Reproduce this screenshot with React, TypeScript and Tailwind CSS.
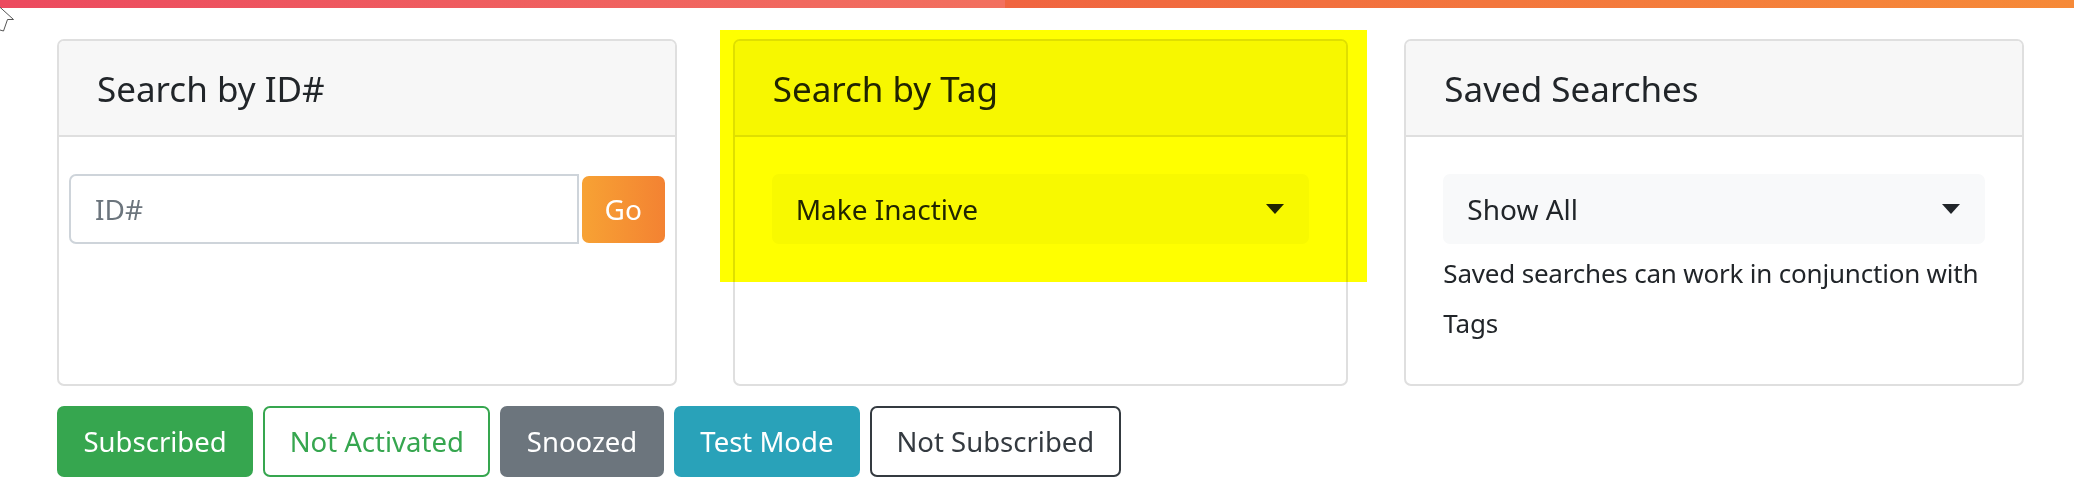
import React from "react";

function Caret() {
  return (
    <svg width="18" height="10" viewBox="0 0 18 10" className="shrink-0">
      <polygon points="0,0 18,0 9,10" fill="#212529" />
    </svg>
  );
}

function Card({
  title,
  bodyClass,
  children,
}: {
  title: string;
  bodyClass: string;
  children: React.ReactNode;
}) {
  return (
    <div className="flex-1 min-w-0 flex flex-col border-2 border-[#dfdfdf] rounded-[7px] bg-white overflow-hidden">
      <div className="h-[96px] bg-[#f7f7f7] border-b-2 border-[#dfdfdf] flex items-center px-[38px]">
        <span className="text-[35px] text-[#212529] leading-none">{title}</span>
      </div>
      <div className={bodyClass}>{children}</div>
    </div>
  );
}

export default function App() {
  return (
    <div className="relative w-[2074px] h-[497px] bg-white font-['Noto_Sans',sans-serif] text-[#212529] overflow-hidden">
      <div className="flex h-[8px]">
        <div className="w-[1005px] bg-linear-to-r from-[#ec4a5f] to-[#f2705f]" />
        <div className="flex-1 bg-linear-to-r from-[#f06440] to-[#f68a38]" />
      </div>

      <div className="flex items-stretch gap-[56px] pl-[57px] pr-[50px] mt-[31px]">
        <Card title="Search by ID#" bodyClass="px-[10px] pt-[37px]">
          <div className="flex items-center gap-[3px]">
            <input
              placeholder="ID#"
              size={4}
              className="flex-1 min-w-0 h-[70px] border-2 border-[#ced4da] rounded-l-[7px] px-[24px] text-[28px] placeholder:text-[#6c757d] outline-none"
            />
            <button className="w-[83px] h-[67px] rounded-[7px] bg-linear-to-r from-[#f7a234] to-[#f38232] text-white text-[28px]">
              Go
            </button>
          </div>
        </Card>

        <div className="relative flex-1 min-w-0 flex">
          <Card title="Search by Tag" bodyClass="px-[37px] pt-[37px]">
            <div className="h-[70px] rounded-[7px] bg-[#f8f9fa] flex items-center justify-between pl-[24px] pr-[25px]">
              <span className="text-[28px]">Make Inactive</span>
              <Caret />
            </div>
          </Card>
          <div className="absolute left-[-13px] top-[-9px] w-[647px] h-[252px] bg-[#ffff00] mix-blend-multiply pointer-events-none" />
        </div>

        <Card title="Saved Searches" bodyClass="px-[37px] pt-[37px] pb-[36px]">
          <div className="h-[70px] rounded-[7px] bg-[#f8f9fa] flex items-center justify-between pl-[24px] pr-[25px]">
            <span className="text-[28px]">Show All</span>
            <Caret />
          </div>
          <p className="mt-[4px] text-[26px] tracking-[-0.2px] leading-[50px]">
            Saved searches can work in conjunction with Tags
          </p>
        </Card>
      </div>

      <div className="flex gap-[10px] pl-[57px] mt-[20px]">
        <button className="h-[71px] px-[24.5px] rounded-[7px] border-2 border-[#36a64f] bg-[#36a64f] text-white text-[27.5px]">
          Subscribed
        </button>
        <button className="h-[71px] px-[24.5px] rounded-[7px] border-2 border-[#36a64f] bg-white text-[#36a64f] text-[27.5px]">
          Not Activated
        </button>
        <button className="h-[71px] px-[24.5px] rounded-[7px] border-2 border-[#6c757d] bg-[#6c757d] text-white text-[27.5px]">
          Snoozed
        </button>
        <button className="h-[71px] px-[24.5px] rounded-[7px] border-2 border-[#29a2b9] bg-[#29a2b9] text-white text-[27.5px]">
          Test Mode
        </button>
        <button className="h-[71px] px-[24.5px] rounded-[7px] border-2 border-[#343a40] bg-white text-[#343a40] text-[27.5px]">
          Not Subscribed
        </button>
      </div>

      <svg className="absolute left-0 top-0" width="20" height="36" viewBox="0 0 20 36">
        <path
          d="M-8 0 L13.5 19.5 L7.5 19.5 L3.5 31 L0 30 L-8 30 Z"
          fill="white"
          stroke="#555"
          strokeWidth="1"
        />
      </svg>
    </div>
  );
}
